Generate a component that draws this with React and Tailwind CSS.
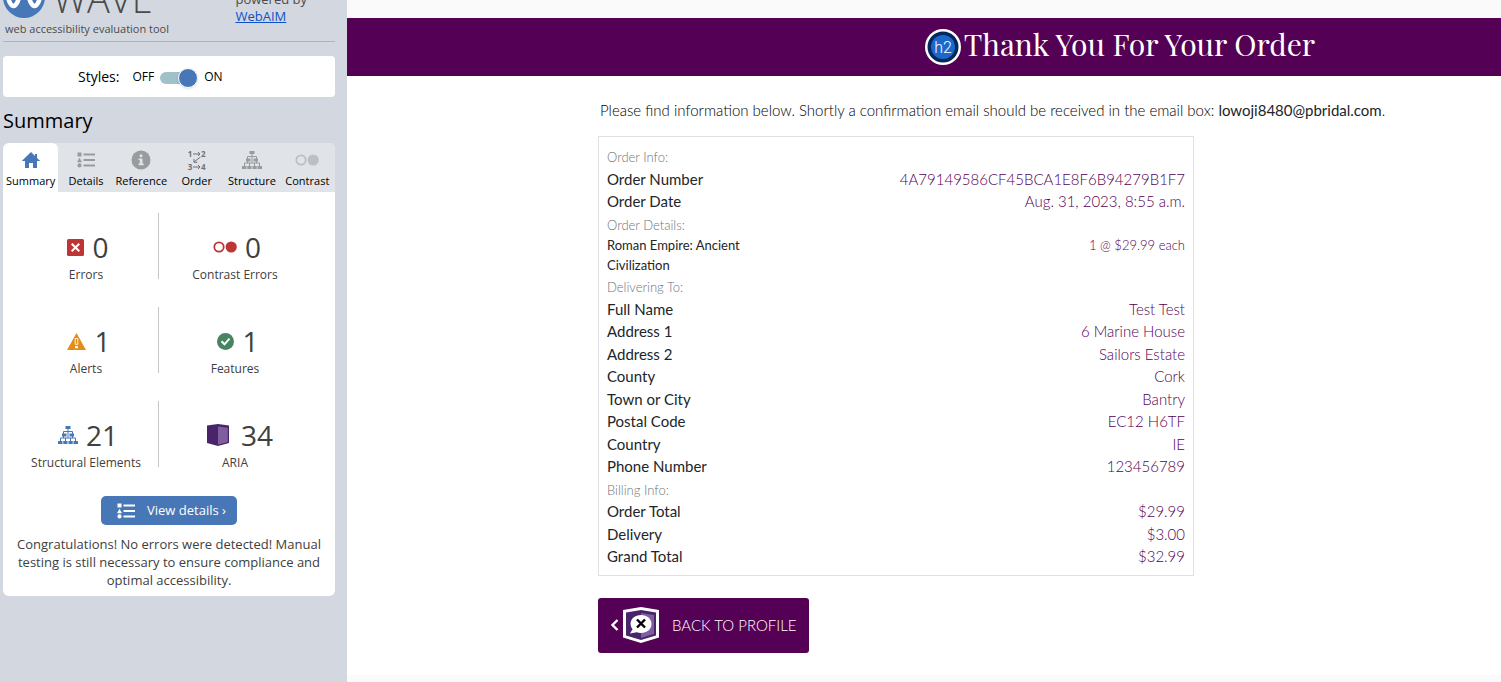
import React from "react";

function HomeIcon() {
  return (
    <svg viewBox="0 0 20 18" width="20" height="18" fill="#4777b6" aria-hidden="true">
      <path d="M10 1 0.8 10H4v7h4v-5h4v5h4v-7h3.2L16 6.9V3h-2v1.9z" />
    </svg>
  );
}

function ListIcon() {
  return (
    <svg viewBox="0 0 18 16" width="18" height="16" fill="currentColor" aria-hidden="true">
      <rect x="0.5" y="0.5" width="4" height="4" />
      <path d="M2.5 5.8 5 10.2H0z" />
      <circle cx="2.5" cy="13.4" r="2.1" />
      <rect x="6.5" y="1.5" width="11.5" height="2" />
      <rect x="6.5" y="7" width="11.5" height="2" />
      <rect x="6.5" y="12.5" width="11.5" height="2" />
    </svg>
  );
}

function InfoIcon() {
  return (
    <svg viewBox="0 0 20 20" width="20" height="20" aria-hidden="true">
      <circle cx="10" cy="10" r="9.5" fill="#999b9d" />
      <circle cx="10" cy="5.8" r="1.5" fill="#e0e3e8" />
      <path d="M7.6 8.4h3.9v5.2h1.2v1.6H7.6v-1.6h1.2V10H7.6z" fill="#e0e3e8" />
    </svg>
  );
}

function OrderIcon() {
  return (
    <span className="grid w-[18px] text-[8px] leading-[7px] font-bold text-[#6f7276]" aria-hidden="true">
      <span className="flex items-center justify-between">
        1
        <svg viewBox="0 0 8 6" width="8" height="6" fill="none" stroke="currentColor"><path d="M0 3h7M5 1l2 2-2 2" /></svg>
        2
      </span>
      <svg className="mx-auto" viewBox="0 0 8 6" width="8" height="6" fill="none" stroke="currentColor"><path d="M7.5 0 1 5M1 2v3.3h3.4" /></svg>
      <span className="flex items-center justify-between">
        3
        <svg viewBox="0 0 8 6" width="8" height="6" fill="none" stroke="currentColor"><path d="M0 3h7M5 1l2 2-2 2" /></svg>
        4
      </span>
    </span>
  );
}

function TreeIcon() {
  return (
    <svg viewBox="0 0 20 18" width="20" height="18" aria-hidden="true">
      <path d="M10 3v9M5.5 8V5.5h9V8M2.5 15v-3h15v3M5.5 9v3M14.5 9v3M7.5 15v-3M12.5 15v-3" fill="none" stroke="currentColor" />
      <path d="M7.500 0h5v3h-5zM4 7.500h4.500v3H4zM11.500 7.500H16v3h-4.500zM0 15h4.500v3H0zM5.300 15h4.200v3H5.300zM10.500 15h4.200v3h-4.200zM15.500 15H20v3h-4.500z" fill="currentColor" />
    </svg>
  );
}

function ContrastIcon() {
  return (
    <svg viewBox="0 0 24 12" width="24" height="12" aria-hidden="true">
      <circle cx="6" cy="6" r="4.7" fill="none" stroke="currentColor" strokeWidth="1.8" />
      <circle cx="18.2" cy="6" r="5.6" fill="currentColor" />
    </svg>
  );
}

function ErrorIcon() {
  return (
    <svg viewBox="0 0 17 17" width="17" height="17" aria-hidden="true">
      <rect width="17" height="17" rx="1.5" fill="#bd3535" />
      <path d="m4.700 4.700 7.600 7.600m0-7.600-7.600 7.600" stroke="#fff" strokeWidth="2" />
    </svg>
  );
}

function AlertIcon() {
  return (
    <svg viewBox="0 0 19 17" width="19" height="17" aria-hidden="true">
      <path d="M9.500 0 19 17H0z" fill="#e38d17" />
      <path d="M8.200 5.500h2.600v5.800H8.200z" fill="none" stroke="#fff" strokeWidth="0.9" />
      <rect x="8.1" y="13" width="2.8" height="2.3" fill="#fff" />
    </svg>
  );
}

function CheckIcon() {
  return (
    <svg viewBox="0 0 17 17" width="17" height="17" aria-hidden="true">
      <circle cx="8.5" cy="8.5" r="8.5" fill="#468562" />
      <path d="m4.500 8.300 3 3 5-5.600" fill="none" stroke="#fff" strokeWidth="2" />
    </svg>
  );
}

function BookIcon() {
  return (
    <svg viewBox="0 0 22 22" width="22" height="22" aria-hidden="true">
      <path d="M0 1.500 11 0l11 1.500V19l-11 3L0 19z" fill="#48256b" />
      <path d="m11 2.500 9.800 1.200v14.300L11 20.800z" fill="#7e5e9d" />
    </svg>
  );
}

const tabs = [
  { name: "Summary", icon: <HomeIcon />, active: true },
  { name: "Details", icon: <ListIcon />, tone: "text-[#999b9d]" },
  { name: "Reference", icon: <InfoIcon />, tone: "text-[#999b9d]" },
  { name: "Order", icon: <OrderIcon />, tone: "text-[#6f7276]" },
  { name: "Structure", icon: <TreeIcon />, tone: "text-[#999b9d]" },
  { name: "Contrast", icon: <ContrastIcon />, tone: "text-[#bcbfc3]" },
];

function Stat({ icon, count, label, spacing = "gap-2 pl-1" }) {
  return (
    <div className="pt-[18px] text-center text-[#404040]">
      <div className={`flex h-8 items-center justify-center ${spacing}`}>
        {icon}
        <span className="text-[28px] leading-8">{count}</span>
      </div>
      <div className="text-xs leading-6">{label}</div>
    </div>
  );
}

function Divider() {
  return <div className="h-[66px] bg-[#c6c6c6]" />;
}

function Sidebar() {
  return (
    <aside className="w-[347px] shrink-0 bg-[#d3d8e0] pr-3 pl-[3px] font-['Open_Sans',sans-serif] text-black">
      <header className="flex h-[42px] items-end justify-between overflow-hidden border-b border-[#b0b4b8] text-[#4b4b4b]">
        <div className="pb-1">
          <div className="mb-[3px] flex items-end gap-2">
            <svg viewBox="0 0 42 42" width="42" height="42" aria-hidden="true">
              <circle cx="21" cy="21" r="21" fill="#4777b6" />
              <path d="M3 16 6.500 26Q10.500 34 14.500 26L21 8l6.500 18q4 8 8 0L39 16" fill="none" stroke="#fff" strokeWidth="4.5" strokeLinejoin="round" />
            </svg>
            <span className="mb-0.5 text-[38px] leading-9 font-light">WAVE</span>
          </div>
          <p className="pl-0.5 text-[11px] leading-4">web accessibility evaluation tool</p>
        </div>
        <p className="pr-7 pb-4 text-[13px] leading-[17px]">
          powered by
          <br />
          <a href="#webaim" className="text-[#0d50c8] underline">WebAIM</a>
        </p>
      </header>

      <div className="mt-[14px] flex h-[41px] items-center rounded bg-white pl-[75px]">
        <label htmlFor="styles" className="text-sm">Styles:</label>
        <span className="ml-[13px] text-xs">OFF</span>
        <input
          id="styles"
          type="checkbox"
          role="switch"
          defaultChecked
          className="relative mx-[6px] mt-[2px] h-3 w-[38px] appearance-none rounded-full bg-[#a0c1ca] before:absolute before:-top-1 before:right-0 before:size-5 before:rounded-full before:border before:border-white before:bg-[#4777b6] before:shadow"
        />
        <span className="text-xs">ON</span>
      </div>

      <h2 className="mt-[9px] text-xl leading-[30px]">Summary</h2>

      <section className="mt-[7px] overflow-hidden rounded-md bg-white">
        <nav className="grid grid-cols-6 bg-[#e0e3e8]">
          {tabs.map((t) => (
            <button
              key={t.name}
              type="button"
              className={`flex h-[49px] flex-col items-center whitespace-nowrap pt-[6px] text-[11px] leading-4 ${t.active ? "rounded-t-md bg-white" : ""}`}
            >
              <span className={`flex h-[22px] items-center ${t.tone || ""}`}>{t.icon}</span>
              <span className="mt-[2px]">{t.name}</span>
            </button>
          ))}
        </nav>
        <div className="grid grid-cols-[144px_1px_1fr] gap-y-5 pt-[21px] pr-6 pl-[11px]">
          <Stat icon={<ErrorIcon />} count="0" label="Errors" />
          <Divider />
          <Stat icon={<span className="text-[#bd3535]"><ContrastIcon /></span>} count="0" label="Contrast Errors" />
          <Stat icon={<AlertIcon />} count="1" label="Alerts" spacing="gap-2 pl-1.5" />
          <Divider />
          <Stat icon={<CheckIcon />} count="1" label="Features" spacing="gap-2 pl-1.5" />
          <Stat icon={<span className="text-[#4777b6]"><TreeIcon /></span>} count="21" label="Structural Elements" />
          <Divider />
          <Stat icon={<BookIcon />} count="34" label="ARIA" spacing="gap-3 pl-2.5" />
        </div>
        <button type="button" className="mx-auto mt-[21px] flex h-[29px] items-center gap-3 rounded-[5px] bg-[#4777b6] px-4 pr-[11px] text-[13px] text-white">
          <ListIcon />
          View details ›
        </button>
        <p className="mt-[10px] px-2 pb-[7px] text-center text-[13px] leading-[18px] text-[#404040]">
          Congratulations! No errors were detected! Manual testing is still necessary to ensure compliance and optimal accessibility.
        </p>
      </section>
    </aside>
  );
}

function Group({ title, children }) {
  return (
    <section>
      <h3><span className="text-[13px] font-light text-[#6c757d]">{title}</span></h3>
      <dl>{children}</dl>
    </section>
  );
}

function Row({ label, value }) {
  return (
    <div className="flex justify-between">
      <dt className="text-[#212529]">{label}</dt>
      <dd className="font-light text-[#540054]">{value}</dd>
    </div>
  );
}

function ProfileBadge() {
  return (
    <svg viewBox="0 0 36 36" width="36" height="36" aria-hidden="true">
      <path d="M0 3 18 0l18 3v27.500L18 36 0 30.500z" fill="#fff" />
      <path d="M3 5.500 18 3l15 2.500v23L18 33 3 28.500z" fill="#48256b" />
      <path d="m18 6 13 2v19l-13 4z" fill="#7e5e9d" />
      <path d="M18 8c6 0 10.500 3.800 10.500 9S24 26 18 26c-1.600 0-3-.2-4.300-.7L7 26.500l2.600-4.300A8.600 8.600 0 0 1 7.500 17C7.500 11.800 12 8 18 8z" fill="#fff" />
      <path d="m14 12.500 8 8m0-8-8 8" stroke="#000" strokeWidth="2.4" />
    </svg>
  );
}

export default function App() {
  return (
    <div className="flex min-h-screen bg-[#fafafa]">
      <Sidebar />
      <div className="min-w-0 flex-1 pt-[18px] font-[Lato,sans-serif]">
        <div className="flex h-[58px] items-center justify-center bg-[#540054] pl-[392px]">
          <svg viewBox="0 0 36 36" width="36" height="36" className="mr-[3px] shrink-0" aria-hidden="true">
            <circle cx="18" cy="18" r="18" fill="#fff" />
            <circle cx="18" cy="18" r="15.5" fill="#05285c" />
            <circle cx="18" cy="18" r="12" fill="#1b68cd" />
            <text x="18" y="24" textAnchor="middle" fontSize="16" fill="#fff" className="font-[Roboto,sans-serif] font-light">h2</text>
          </svg>
          <h1 className="pb-1.5 font-['Playfair_Display','Liberation_Serif',serif] text-[30px] leading-9 whitespace-nowrap text-white">
            Thank You For Your Order
          </h1>
        </div>
        <main className="bg-white pt-[22px] pb-[22px] pl-[251px]">
          <p className="pl-0.5 text-[15px] leading-6 font-light whitespace-nowrap text-black">
            Please find information below. Shortly a confirmation email should be received in the email box:{" "}
            <strong className="font-normal text-[#212529]">lowoji8480@pbridal.com</strong>.
          </p>
          <div className="mt-[14px] mr-[307px] border border-[#dee2e6] px-2 pt-2 pb-[7px] text-[15px] leading-normal">
            <Group title="Order Info:">
              <Row label="Order Number" value="4A79149586CF45BCA1E8F6B94279B1F7" />
              <Row label="Order Date" value="Aug. 31, 2023, 8:55 a.m." />
            </Group>
            <Group title="Order Details:">
              <dl className="flex justify-between text-[13px] leading-5">
                <dt className="w-1/4 text-[#212529]">Roman Empire: Ancient Civilization</dt>
                <dd className="font-light text-[#540054]">1 @ $29.99 each</dd>
              </dl>
            </Group>
            <Group title="Delivering To:">
              <Row label="Full Name" value="Test Test" />
              <Row label="Address 1" value="6 Marine House" />
              <Row label="Address 2" value="Sailors Estate" />
              <Row label="County" value="Cork" />
              <Row label="Town or City" value="Bantry" />
              <Row label="Postal Code" value="EC12 H6TF" />
              <Row label="Country" value="IE" />
              <Row label="Phone Number" value="123456789" />
            </Group>
            <Group title="Billing Info:">
              <Row label="Order Total" value="$29.99" />
              <Row label="Delivery" value="$3.00" />
              <Row label="Grand Total" value="$32.99" />
            </Group>
          </div>
          <a href="#profile" className="mt-[22px] inline-flex h-[55px] items-center rounded-[3px] bg-[#540054] pr-3 pl-3 text-[15px] font-light text-white">
            <svg viewBox="0 0 9 12" width="9" height="12" className="mr-1" fill="none" stroke="#fff" strokeWidth="2.4" aria-hidden="true">
              <path d="M7.500 1 2.500 6l5 5" />
            </svg>
            <ProfileBadge />
            <span className="ml-[13px]">BACK TO PROFILE</span>
          </a>
        </main>
      </div>
    </div>
  );
}
